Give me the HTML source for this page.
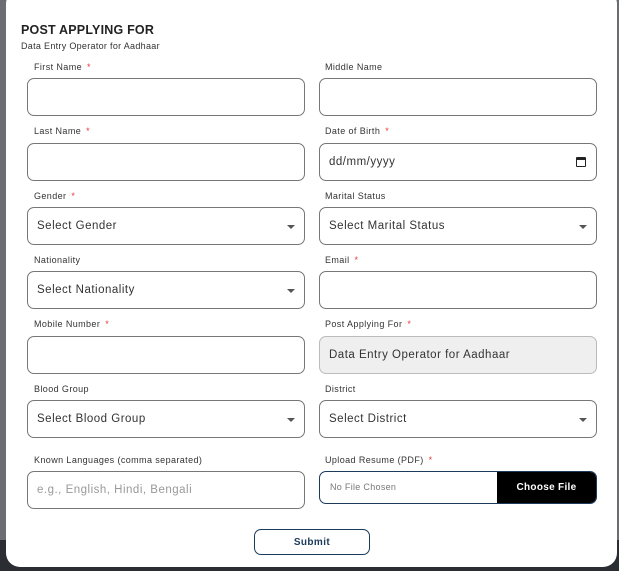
<!DOCTYPE html>
<html><head><style>
*{box-sizing:border-box;margin:0;padding:0}
body{width:619px;height:571px;overflow:hidden;background:#6a6e73;font-family:"Liberation Sans",sans-serif;position:relative}
.bot{position:absolute;left:0;right:0;top:540px;bottom:0;background:#2a2d31}
.modal{position:absolute;left:6px;top:-10px;width:611px;height:577px;background:#fff;border-radius:14px}
.h{position:absolute;left:21px;top:23px;font-size:12.5px;font-weight:bold;color:#222;letter-spacing:0.2px}
.sub{position:absolute;left:21px;top:41px;font-size:9px;color:#333;letter-spacing:0.3px}
.l{position:absolute;font-size:9px;color:#333;letter-spacing:0.4px}
.l b{color:#e53935;font-weight:normal;margin-left:5px}
.i{position:absolute;width:278px;height:38px;border:1px solid #777;border-radius:7px;font-size:11.5px;color:#333;padding:0 9px;display:flex;align-items:center;letter-spacing:0.5px}
.s::after{content:"";position:absolute;right:9px;top:17px;border:4px solid transparent;border-top:4px solid #555;border-bottom:0}
.ph{color:#999}
.dis{background:#efefef}
.file{position:absolute;left:319px;top:471px;width:278px;height:33px;border:1px solid #1b3a5c;border-radius:7px;overflow:hidden;font-size:9px;letter-spacing:0.3px}
.file span{position:absolute;left:10px;top:10px;color:#777}
.file div{position:absolute;right:0;top:0;bottom:0;width:99px;background:#000;color:#fff;font-weight:bold;display:flex;align-items:center;justify-content:center;font-size:10px}
.sb{position:absolute;left:254px;top:529px;width:116px;height:26px;border:1px solid #1b3a5c;border-radius:7px;color:#1b3a5c;font-size:10px;font-weight:bold;display:flex;align-items:center;justify-content:center;letter-spacing:0.4px}
</style></head><body>
<div class="bot"></div>
<div class="modal"></div>
<div class="h">POST APPLYING FOR</div>
<div class="sub">Data Entry Operator for Aadhaar</div>

<div class="l" style="left:34px;top:62px">First Name<b>*</b></div>
<div class="l" style="left:325px;top:62px">Middle Name</div>
<div class="i" style="left:27px;top:78px"></div>
<div class="i" style="left:319px;top:78px"></div>

<div class="l" style="left:34px;top:126px">Last Name<b>*</b></div>
<div class="l" style="left:325px;top:126px">Date of Birth<b>*</b></div>
<div class="i" style="left:27px;top:143px"></div>
<div class="i" style="left:319px;top:143px">dd/mm/yyyy<span style="position:absolute;right:10px;top:13px;width:10px;height:10px;border:1.5px solid #222;border-top-width:3px;border-radius:1px"></span></div>

<div class="l" style="left:34px;top:191px">Gender<b>*</b></div>
<div class="l" style="left:325px;top:191px">Marital Status</div>
<div class="i s" style="left:27px;top:207px">Select Gender</div>
<div class="i s" style="left:319px;top:207px">Select Marital Status</div>

<div class="l" style="left:34px;top:255px">Nationality</div>
<div class="l" style="left:325px;top:255px">Email<b>*</b></div>
<div class="i s" style="left:27px;top:271px">Select Nationality</div>
<div class="i" style="left:319px;top:271px"></div>

<div class="l" style="left:34px;top:319px">Mobile Number<b>*</b></div>
<div class="l" style="left:325px;top:319px">Post Applying For<b>*</b></div>
<div class="i" style="left:27px;top:336px"></div>
<div class="i dis" style="left:319px;top:336px;border-color:#bbb">Data Entry Operator for Aadhaar</div>

<div class="l" style="left:34px;top:384px">Blood Group</div>
<div class="l" style="left:325px;top:384px">District</div>
<div class="i s" style="left:27px;top:400px">Select Blood Group</div>
<div class="i s" style="left:319px;top:400px">Select District</div>

<div class="l" style="left:34px;top:455px">Known Languages (comma separated)</div>
<div class="l" style="left:325px;top:455px">Upload Resume (PDF)<b>*</b></div>
<div class="i" style="left:27px;top:471px"><span class="ph">e.g., English, Hindi, Bengali</span></div>
<div class="file"><span>No File Chosen</span><div>Choose File</div></div>

<div class="sb">Submit</div>
</body></html>
